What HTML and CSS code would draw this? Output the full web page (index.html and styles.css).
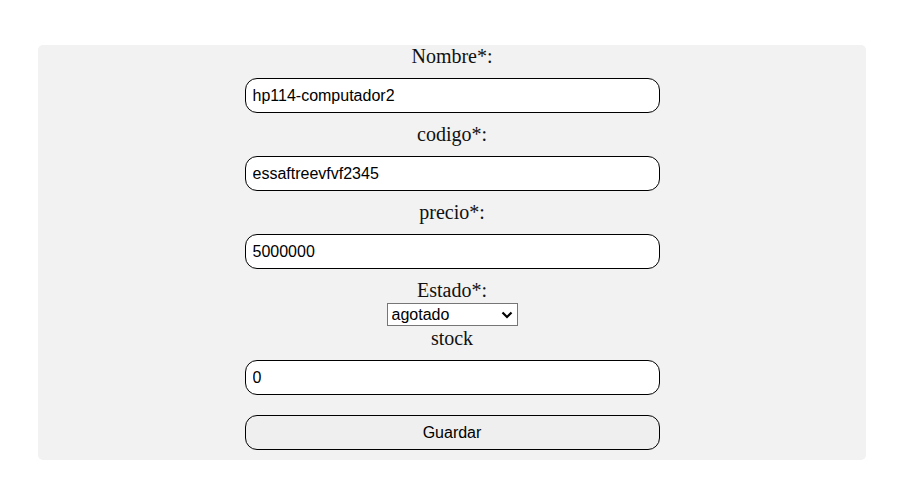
FILE: index.html
```html
<!DOCTYPE html>
<html lang="es">
<head>
<meta charset="utf-8">
<title>Producto</title>
<link rel="stylesheet" href="styles.css">
</head>
<body>
<form class="card">
  <label class="lbl" for="nombre">Nombre*:</label>
  <input class="field" id="nombre" type="text" value="hp114-computador2">
  <label class="lbl" for="codigo">codigo*:</label>
  <input class="field" id="codigo" type="text" value="essaftreevfvf2345">
  <label class="lbl" for="precio">precio*:</label>
  <input class="field" id="precio" type="text" value="5000000">
  <div class="group">
    <label class="lbl" for="estado">Estado*:</label>
    <span class="sel-wrap">
      <select class="sel" id="estado">
        <option>agotado</option>
        <option>disponible</option>
      </select>
      <svg class="chev" width="12" height="8" viewBox="0 0 12 8" aria-hidden="true"><path d="M1.5 1.5 L6 6 L10.5 1.5" fill="none" stroke="#000" stroke-width="2.2"/></svg>
    </span>
    <label class="lbl" for="stock">stock</label>
  </div>
  <input class="field" id="stock" type="text" value="0">
  <button class="btn" type="button">Guardar</button>
</form>
</body>
</html>
```
FILE: styles.css
```css
html, body {
  margin: 0;
  padding: 0;
  background: #ffffff;
}
body {
  padding: 45px 33px 0 38px;
}
.card {
  background: #f2f2f2;
  border-radius: 5px;
  display: flex;
  flex-direction: column;
  align-items: center;
  gap: 10px;
  padding: 0 0 10px;
  width: 828px;
  box-sizing: border-box;
}
.lbl {
  font-family: "Liberation Serif", "Times New Roman", serif;
  font-size: 20px;
  line-height: 23px;
  color: #111;
  display: block;
  text-align: center;
}
.group {
  display: flex;
  flex-direction: column;
  align-items: center;
}
.sel-wrap {
  position: relative;
  display: block;
  margin: 1px 0 1px;
}
.sel {
  display: block;
  width: 131px;
  height: 23px;
  box-sizing: border-box;
  font-family: "Liberation Sans", Arial, sans-serif;
  font-size: 16px;
  color: #000;
  background: #fff;
  border: 1px solid #767676;
  border-radius: 0;
  padding: 0 24px 0 4px;
  appearance: none;
  -webkit-appearance: none;
}
.chev {
  position: absolute;
  right: 5px;
  top: 8px;
  pointer-events: none;
}
.field {
  width: 415px;
  height: 35px;
  box-sizing: border-box;
  border: 1px solid #000;
  border-radius: 12px;
  background: #fff;
  padding: 0 7px;
  font-family: "Liberation Sans", Arial, sans-serif;
  font-size: 16px;
  color: #000;
  outline: none;
}
.btn {
  width: 415px;
  height: 35px;
  box-sizing: border-box;
  border: 1px solid #000;
  border-radius: 12px;
  background: #efefef;
  font-family: "Liberation Sans", Arial, sans-serif;
  font-size: 16px;
  color: #000;
  margin-top: 10px;
}
```
